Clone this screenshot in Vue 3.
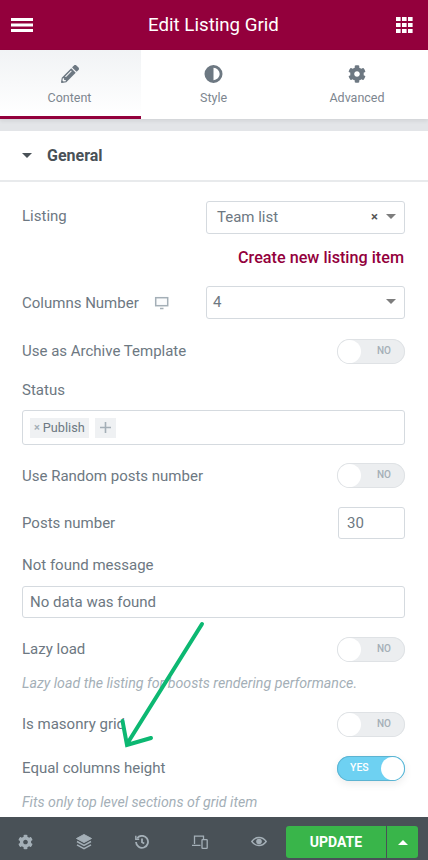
<template>
  <div class="panel">
    <header class="top">
      <svg width="22" height="14" viewBox="0 0 22 14"><path d="M0 1.500h22M0 7h22M0 12.500h22" stroke="#fff" stroke-width="3" /></svg>
      <div class="top-title">Edit Listing Grid</div>
      <svg width="17" height="16" viewBox="0 0 17 16" fill="#fff">
        <template v-for="y in [0, 6, 12]" :key="y">
          <rect v-for="x in [0, 6, 12]" :key="x" :x="x" :y="y" width="4.6" height="4" />
        </template>
      </svg>
    </header>

    <nav class="tabs">
      <div class="tab active">
        <svg width="18" height="18" viewBox="0 0 512 512" fill="#6d7882"><path :d="pencil" /></svg>
        <span>Content</span>
      </div>
      <div class="tab t-style">
        <svg width="19" height="19" viewBox="0 0 19 19"><circle cx="9.5" cy="9.5" r="8" fill="none" stroke="#6d7882" stroke-width="3" /><path d="M9.5 1.500a8 8 0 0 0 0 16z" fill="#6d7882" /></svg>
        <span>Style</span>
      </div>
      <div class="tab t-adv">
        <svg width="18" height="18" viewBox="0 0 512 512" fill="#6d7882"><path :d="cog" /></svg>
        <span>Advanced</span>
      </div>
    </nav>
    <div class="band"></div>

    <div class="section-head">
      <i class="caret dark"></i>
      <span>General</span>
    </div>

    <div class="controls">
      <div class="row r-listing">
        <label>Listing</label>
        <div class="select">
          <span class="sel-val">Team list</span>
          <span class="clear">×</span>
          <i class="caret"></i>
        </div>
      </div>
      <div class="link">Create new listing item</div>

      <div class="row r-columns">
        <label>Columns Number
          <svg class="ic-desk" width="15" height="14" viewBox="0 0 15 14" fill="none"><rect x="1.700" y="1.700" width="12" height="8" fill="#fbfcfd" stroke="#a4afb7" stroke-width="1.500" /><path d="M6 12.500h3.500" stroke="#a4afb7" stroke-width="1.500" /></svg>
        </label>
        <div class="select tight">
          <span class="sel-val">4</span>
          <i class="caret"></i>
        </div>
      </div>

      <div class="row r-archive up">
        <label>Use as Archive Template</label>
        <div class="switch"><span>NO</span><b></b></div>
      </div>

      <label class="block r-status">Status</label>
      <div class="tags">
        <span class="tag"><em>×</em> Publish</span>
        <span class="tag plus">
          <svg width="11" height="11" viewBox="0 0 11 11"><path d="M5.500 0v11M0 5.500h11" stroke="#a4afb7" stroke-width="1.600" /></svg>
        </span>
      </div>

      <div class="row r-random">
        <label>Use Random posts number</label>
        <div class="switch"><span>NO</span><b></b></div>
      </div>

      <div class="row r-posts">
        <label>Posts number</label>
        <div class="num">30</div>
      </div>

      <label class="block r-notfound">Not found message</label>
      <div class="text-input">No data was found</div>

      <div class="row r-lazy up">
        <label>Lazy load</label>
        <div class="switch"><span>NO</span><b></b></div>
      </div>
      <p class="desc d-lazy">Lazy load the listing for boosts rendering performance.</p>

      <div class="row r-masonry up">
        <label>Is masonry grid</label>
        <div class="switch"><span>NO</span><b></b></div>
      </div>

      <div class="row r-equal up">
        <label>Equal columns height</label>
        <div class="switch on"><span>YES</span><b></b></div>
      </div>
      <p class="desc d-equal">Fits only top level sections of grid item</p>
    </div>

    <footer class="bottom">
      <div class="tools">
        <svg width="15" height="16" viewBox="0 0 512 512" fill="#a4afb7"><path :d="cog" /></svg>
        <svg width="16" height="16" viewBox="0 0 16 16" fill="none" stroke="#a4afb7"><path d="M8 .5l7.500 4L8 8.500.5 4.500z" fill="#a4afb7" /><path d="M1 7.500l7 3.800 7-3.800M1 10.800l7 3.800 7-3.800" stroke-width="1.500" /></svg>
        <svg width="14" height="14" viewBox="0 0 14 14" fill="none" stroke="#a4afb7" stroke-width="1.800"><path d="M2.200 3.200A6 6 0 1 1 1 7" /><path d="M.8 .8v3.400h3.400" stroke-width="1.400" /><path d="M7 3.500V7.300l2.200 1.200" /></svg>
        <svg width="16" height="14" viewBox="0 0 16 14" fill="none" stroke="#a4afb7" stroke-width="1.300"><path d="M2.500 9V1.200h9V4M0 10.300h8.500" /><rect x="10" y="4.700" width="5.200" height="8.600" rx=".6" /></svg>
        <svg width="16" height="11" viewBox="0 0 16 11" fill="none" stroke="#a4afb7" stroke-width="1.400"><path d="M.8 5.500C4.500.2 11.500.2 15.200 5.500 11.500 10.800 4.500 10.800.8 5.500z" /><circle cx="8" cy="5.500" r="2.800" fill="#a4afb7" stroke="none" /></svg>
      </div>
      <div class="actions">
        <div class="update">UPDATE</div>
        <div class="more"><i class="caret up"></i></div>
      </div>
    </footer>

    <svg class="arrow" width="428" height="860" viewBox="0 0 428 860" fill="none" stroke="#0cb872" stroke-width="4" stroke-linecap="round">
      <path d="M202 624L127 744M122.500 721L127 745L151 738" />
    </svg>
  </div>
</template>

<script setup>
const cog = 'M487.4 315.7l-42.6-24.6c4.3-23.2 4.3-47 0-70.2l42.6-24.6c4.9-2.8 7.1-8.6 5.500-14-11.100-35.6-30-67.8-54.7-94.6-3.8-4.100-10-5.100-14.8-2.300L380.8 110c-17.900-15.400-38.500-27.300-60.800-35.100V25.800c0-5.600-3.900-10.500-9.400-11.700-36.700-8.200-74.300-7.800-109.200 0-5.500 1.200-9.400 6.100-9.400 11.700V75c-22.200 7.900-42.800 19.800-60.800 35.100L88.700 85.500c-4.900-2.800-11-1.900-14.800 2.300-24.700 26.700-43.600 58.900-54.700 94.600-1.700 5.400.6 11.200 5.500 14L67.300 221c-4.300 23.200-4.300 47 0 70.200l-42.600 24.600c-4.900 2.800-7.100 8.600-5.500 14 11.100 35.600 30 67.800 54.700 94.600 3.800 4.100 10 5.100 14.800 2.300l42.600-24.600c17.900 15.400 38.500 27.300 60.800 35.100v49.200c0 5.600 3.900 10.500 9.400 11.700 36.700 8.200 74.300 7.800 109.200 0 5.500-1.200 9.400-6.100 9.400-11.700v-49.200c22.200-7.900 42.800-19.800 60.800-35.100l42.600 24.600c4.900 2.800 11 1.900 14.800-2.300 24.700-26.700 43.600-58.900 54.700-94.600 1.500-5.500-.7-11.300-5.600-14.100zM256 336c-44.100 0-80-35.900-80-80s35.900-80 80-80 80 35.900 80 80-35.900 80-80 80z'
const pencil = 'M497.900 142.100l-46.100 46.100c-4.700 4.700-12.300 4.700-17 0l-111-111c-4.700-4.700-4.700-12.300 0-17l46.100-46.100c18.700-18.700 49.100-18.700 67.900 0l60.100 60.100c18.800 18.700 18.800 49.100 0 67.900zM284.200 99.800L21.600 362.400.4 483.900c-2.900 16.400 11.400 30.600 27.800 27.800l121.500-21.300 262.600-262.600c4.700-4.700 4.700-12.300 0-17l-111-111c-4.800-4.700-12.400-4.700-17.100 0zM124.100 339.900c-5.500-5.500-5.500-14.300 0-19.800l154-154c5.500-5.500 14.300-5.500 19.800 0s5.500 14.300 0 19.800l-154 154c-5.500 5.500-14.300 5.500-19.800 0zM88 424h48v36.300l-64.500 11.300-31.100-31.100L51.700 376H88v48z'
</script>

<style>
html, body { margin: 0; background: #fff; }
</style>

<style scoped>
.panel {
  position: relative;
  width: 428px;
  height: 860px;
  overflow: hidden;
  background: #fff;
  font-family: Roboto, "Liberation Sans", sans-serif;
  color: #6d7882;
  font-size: 15px;
}
.top {
  height: 50px;
  background: #93003c;
  display: flex;
  align-items: center;
  justify-content: space-between;
  padding: 0 15px 0 11px;
  box-sizing: border-box;
}
.top-title {
  color: #fff;
  font-size: 18.7px;
  font-weight: 400;
  margin-right: 2px;
}
.tabs {
  display: flex;
  height: 69px;
  position: relative;
  box-shadow: 0 2px 4px rgba(0, 0, 0, .08);
}
.tab {
  width: 141px;
  height: 69px;
  box-sizing: border-box;
  display: flex;
  flex-direction: column;
  align-items: center;
  padding-top: 15px;
  gap: 7px;
  font-size: 12.500px;
  color: #7d868f;
}
.tab span { line-height: 15px; }
.tab svg { height: 18px; }
.t-style { width: 145px; }
.t-adv { width: 142px; }
.tab.active {
  background: linear-gradient(#f1f3f5, #fff);
  border-bottom: 3px solid #93003c;
  padding-right: 2px;
}
.band {
  height: 12px;
  background: #e3e5e8;
}
.section-head {
  height: 49px;
  border-bottom: 2px solid #e8eaec;
  box-sizing: content-box;
  display: flex;
  align-items: center;
  padding-left: 22px;
  gap: 15px;
  font-size: 16px;
  font-weight: 700;
  color: #495157;
}
.caret {
  display: inline-block;
  width: 0;
  height: 0;
  border-left: 5px solid transparent;
  border-right: 5px solid transparent;
  border-top: 5px solid #7d7d7d;
}
.caret.dark { border-top-color: #495157; }
.caret.up {
  border-top: 0;
  border-bottom: 5px solid #fff;
}
.controls { padding: 0 23px 0 22px; }
.row {
  display: flex;
  align-items: center;
  justify-content: space-between;
}
.row.up label { padding-bottom: 2px; }
label { font-size: 15px; color: #6d7882; line-height: 18px; }
.block { display: block; }
.select {
  width: 199px;
  height: 33px;
  box-sizing: border-box;
  border: 1px solid #d5dadf;
  border-radius: 3px;
  display: flex;
  align-items: center;
  padding: 0 8px 2px 10px;
  font-size: 15px;
  color: #6d7882;
}
.select.tight { padding-left: 6px; }
.sel-val { flex: 1; }
.clear { font-weight: 700; font-size: 13px; color: #555; margin-right: 8px; }
.r-listing { margin-top: 19px; align-items: flex-start; }
.r-listing label { margin-top: 6px; }
.link {
  margin-top: 14px;
  text-align: right;
  font-size: 16.2px;
  font-weight: 500;
  color: #93003c;
  line-height: 20px;
  padding-right: 1px;
}
.r-columns { margin-top: 18px; }
.ic-desk { margin-left: 12px; vertical-align: -2px; }
.switch {
  position: relative;
  width: 68px;
  height: 25px;
  box-sizing: border-box;
  border-radius: 13px;
  background: #eceef0;
  box-shadow: inset 0 0 0 1px #dfe2e5;
}
.switch span {
  position: absolute;
  right: 14px;
  top: 0;
  line-height: 24px;
  font-size: 10px;
  font-weight: 500;
  color: #a4afb7;
}
.switch b {
  position: absolute;
  left: 1px;
  top: 1px;
  width: 23px;
  height: 23px;
  border-radius: 50%;
  background: #fff;
}
.switch.on {
  background: #6ed1f2;
  box-shadow: inset 0 0 0 1px #5cb3d1, 0 3px 8px rgba(0, 0, 0, .08);
}
.switch.on span { right: auto; left: 13px; color: #fff; font-size: 10.5px; }
.switch.on b { left: auto; right: 1px; }
.r-archive { margin-top: 20px; }
.r-status { margin-top: 17px; }
.tags {
  margin-top: 11px;
  height: 35px;
  box-sizing: border-box;
  border: 1px solid #d5dadf;
  border-radius: 3px;
  display: flex;
  align-items: center;
  gap: 6px;
  padding-left: 7px;
}
.tag {
  height: 20px;
  background: #eff1f3;
  display: flex;
  align-items: center;
  padding: 0 4px;
  font-size: 12.7px;
  color: #6d7882;
  gap: 3px;
}
.tag em { font-style: normal; color: #a4afb7; font-weight: 700; font-size: 11px; }
.tag.plus { width: 21px; box-sizing: border-box; justify-content: center; padding: 0; }
.r-random { margin-top: 18px; }
.r-posts { margin-top: 19px; }
.num {
  width: 67px;
  height: 32px;
  box-sizing: border-box;
  border: 1px solid #d5dadf;
  border-radius: 3px;
  padding-left: 8px;
  line-height: 30px;
  font-size: 15px;
  color: #6d7882;
}
.r-notfound { margin-top: 17px; }
.text-input {
  margin-top: 12px;
  height: 32px;
  box-sizing: border-box;
  border: 1px solid #d5dadf;
  border-radius: 3px;
  padding-left: 7px;
  line-height: 30px;
  font-size: 15px;
  color: #6d7882;
}
.r-lazy { margin-top: 19px; }
.desc {
  margin: 0;
  font-style: italic;
  font-size: 14.2px;
  line-height: 16px;
  color: #a4afb7;
}
.d-lazy { margin-top: 13px; }
.r-masonry { margin-top: 21px; }
.r-equal { margin-top: 19px; }
.d-equal { margin-top: 13px; }
.bottom {
  position: absolute;
  left: 0;
  right: 0;
  bottom: 0;
  height: 43px;
  background: #495157;
  display: flex;
  align-items: center;
  justify-content: space-between;
  padding: 6px 10px 0 18px;
  box-sizing: border-box;
}
.tools {
  display: flex;
  align-items: center;
  gap: 43px;
}
.actions { display: flex; height: 32px; margin-top: 1px; }
.update {
  width: 100px;
  background: #39b54a;
  border-radius: 3px 0 0 3px;
  color: #fff;
  font-size: 14px;
  font-weight: 700;
  text-align: center;
  line-height: 32px;
}
.more {
  width: 31px;
  margin-left: 1px;
  background: #39b54a;
  border-radius: 0 3px 3px 0;
  display: flex;
  align-items: center;
  justify-content: center;
}
.arrow {
  position: absolute;
  left: 0;
  top: 0;
  pointer-events: none;
}
</style>
